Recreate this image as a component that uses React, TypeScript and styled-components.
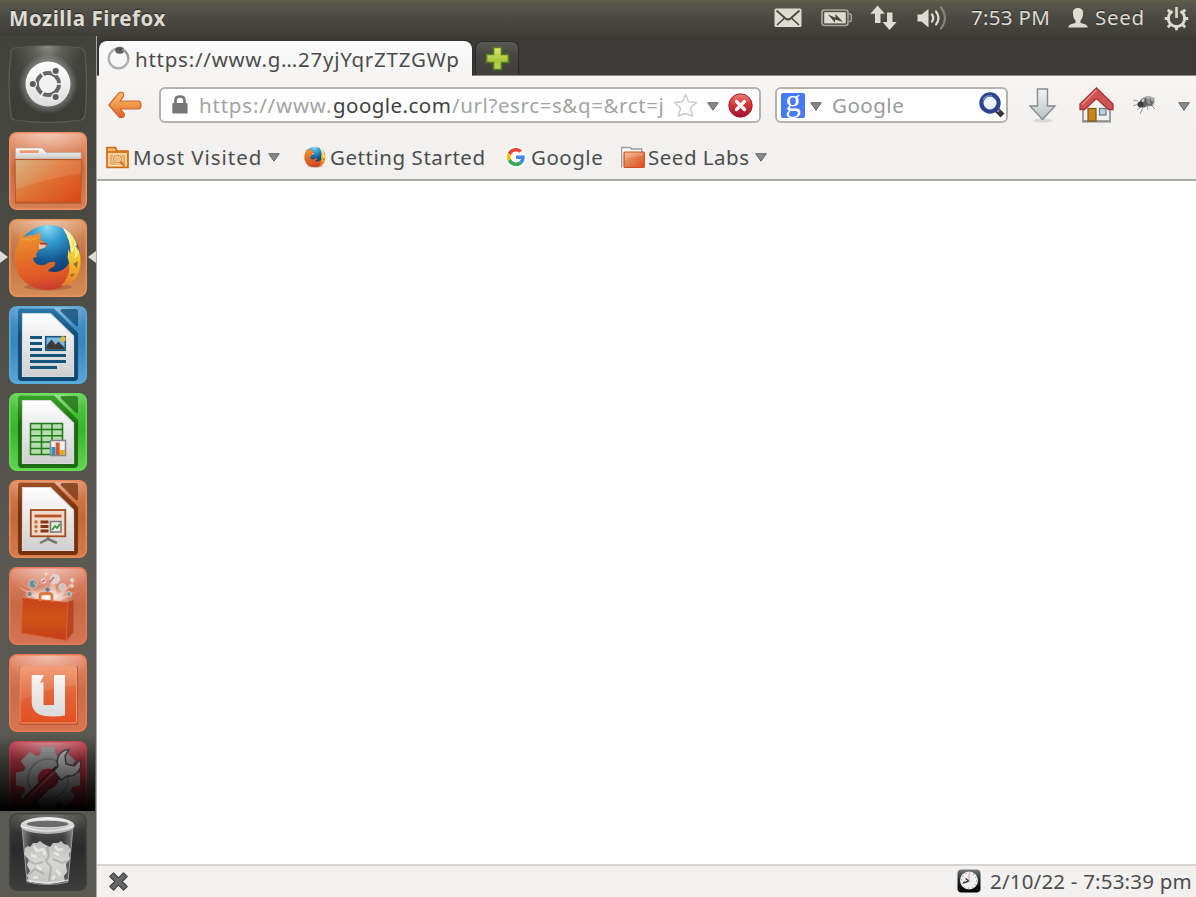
import React from "react";
import styled, { createGlobalStyle, css } from "styled-components";

const Global = createGlobalStyle`
  * { box-sizing: border-box; }
  html, body { margin: 0; padding: 0; overflow: hidden; }
  body { font-family: "Noto Sans", "Open Sans", sans-serif; font-size: 21px; color: #4c4c4c; background: #fff; }
  svg { display: block; flex: none; overflow: visible; }
`;

const Desktop = styled.div`
  width: 1196px;
  height: 897px;
  display: flex;
  flex-direction: column;
  overflow: hidden;
  background: #3c3b37;
`;

const Panel = styled.header`
  height: 36px;
  flex: none;
  display: flex;
  align-items: center;
  justify-content: space-between;
  padding: 0 7px 0 9px;
  background: linear-gradient(#625f50 0, #59574d 3px, #4a4943 18px, #3e3d38 36px);
`;

const Indicators = styled.div`
  display: flex;
  align-items: center;
`;

const Text = styled.span<{ $w?: number; $ls?: number; $size?: number }>`
  display: block;
  flex: none;
  white-space: nowrap;
  line-height: 28px;
  ${(p) => p.$w !== undefined && css`width: ${p.$w}px;`}
  letter-spacing: ${(p) => p.$ls ?? 0}px;
  font-size: ${(p) => p.$size ?? 20.5}px;
`;

const PanelText = styled(Text)`
  color: #dfdbd2;
  text-shadow: 0 -1px 1px rgba(0, 0, 0, 0.5);
  margin-top: -2px;
`;

const PanelTitle = styled(PanelText)`
  font-weight: 700;
  margin-top: 0;
`;

const Gap = styled.i<{ $w: number }>`
  flex: none;
  width: ${(p) => p.$w}px;
`;

const Workspace = styled.div`
  flex: 1;
  min-height: 0;
  display: flex;
`;

const Launcher = styled.nav`
  position: relative;
  width: 96px;
  flex: none;
  display: flex;
  flex-direction: column;
  padding: 9px 0 0 9px;
  gap: 9px;
  background: linear-gradient(165deg, #41423c 0, #4b4b44 24%, #595951 60%, #5c5c54 100%);
  overflow: hidden;
`;

const Tile = styled.div<{ $bg: string; $edge: string }>`
  width: 78px;
  height: 78px;
  flex: none;
  border-radius: 8px;
  background: ${(p) => p.$bg};
  box-shadow: inset 0 0 0 1.5px ${(p) => p.$edge};
`;

const LauncherFold = styled.div`
  position: absolute;
  left: 0;
  top: 698px;
  width: 95px;
  height: 77px;
  background: linear-gradient(rgba(0, 0, 0, 0) 0, rgba(0, 0, 0, 0.36) 30%, rgba(0, 0, 0, 0.68) 62%, rgba(0, 0, 0, 0.97) 94%, #000);
`;

const TrashDock = styled.div`
  position: absolute;
  left: 0;
  top: 775px;
  width: 95px;
  height: 86px;
  padding: 2px 0 0 9px;
  background: #5a5a52;
`;

const Pip = styled.div<{ $right?: boolean }>`
  position: absolute;
  top: 215px;
  ${(p) => (p.$right ? "right: 0;" : "left: 0;")}
  border: 6px solid transparent;
  border-${(p) => (p.$right ? "right" : "left")}: 8px solid #dcdcda;
  border-${(p) => (p.$right ? "left" : "right")}: 0;
`;

const Browser = styled.main`
  flex: 1;
  min-width: 0;
  display: flex;
  flex-direction: column;
  border-left: 1px solid #aaa9a1;
  background: #fff;
`;

const TabStrip = styled.div`
  height: 40px;
  flex: none;
  display: flex;
  align-items: flex-end;
  padding-left: 2px;
  background: #3c3b37;
  border-bottom: 1px solid #8d8c88;
`;

const Tab = styled.div`
  height: 35px;
  width: 373px;
  margin-bottom: -1px;
  display: flex;
  align-items: center;
  padding-left: 8px;
  border-radius: 8px 8px 0 0;
  background: linear-gradient(#fbfbfb, #f5f4f3);
  box-shadow: 0 0 3px #1e1d1a;
`;

const NewTab = styled.button`
  width: 44px;
  height: 34px;
  margin-left: 3px;
  padding: 0;
  display: flex;
  align-items: center;
  justify-content: center;
  border: 1px solid #292824;
  border-bottom: 0;
  border-radius: 7px 7px 0 0;
  background: linear-gradient(#5a5955, #484742 35%, #3f3e3a);
`;

const NavBar = styled.div`
  height: 58px;
  flex: none;
  display: flex;
  align-items: center;
  padding-left: 11px;
  background: linear-gradient(#f6f5f4, #f2f1f0);
`;

const Field = styled.div<{ $w: number }>`
  width: ${(p) => p.$w}px;
  height: 36px;
  flex: none;
  display: flex;
  align-items: center;
  border: 2px solid #b5b2ad;
  border-radius: 6px;
  background: #fff;
`;

const UrlClip = styled.div`
  width: 465px;
  flex: none;
  overflow: hidden;
  display: flex;
`;

const UrlPart = styled(Text)<{ $strong?: boolean }>`
  color: ${(p) => (p.$strong ? "#3f3f3f" : "#a3a3a3")};
`;

const Placeholder = styled(Text)`
  color: #9a9a9a;
`;

const BookmarkBar = styled.div`
  height: 47px;
  flex: none;
  display: flex;
  align-items: center;
  padding-left: 9px;
  background: #f2f1f0;
  border-bottom: 2px solid #aaa9a6;
`;

const Page = styled.div`
  flex: 1;
  background: #fff;
`;

const StatusBar = styled.footer`
  height: 33px;
  flex: none;
  display: flex;
  align-items: center;
  justify-content: space-between;
  padding: 0 4px 0 12px;
  background: #f2f1f0;
  border-top: 2px solid #d5d4d2;
`;

const ClockGroup = styled.div`
  display: flex;
  align-items: center;
  height: 28px;
  margin-top: -2px;
`;

const CaretSvg = styled.svg`
  position: relative;
  top: 1px;
`;

const Caret = () => (
  <CaretSvg width="12" height="9" viewBox="0 0 12 9">
    <path d="M.7.7h10.6L6 8.200z" fill="#888" stroke="#666" strokeWidth="1" />
  </CaretSvg>
);

const MailIcon = () => (
  <svg width="28" height="20" viewBox="0 0 28 20">
    <rect x=".5" y=".5" width="27" height="18.500" rx="1.500" fill="#dfdbd2" />
    <path d="M2.500 2.500l9 8q2.500 2 5 0l9-8M3 17l7-6.500M25 17l-7-6.500" fill="none" stroke="#46453f" strokeWidth="1.700" />
  </svg>
);

const BatteryIcon = () => (
  <svg width="31" height="18" viewBox="0 0 31 18">
    <rect x="1" y="1" width="26" height="15.500" rx="2.500" fill="none" stroke="#aaa79e" strokeWidth="1.600" />
    <path d="M28 5h1q1.300 0 1.300 1.500v4.500q0 1.500-1.300 1.500h-1" fill="none" stroke="#aaa79e" strokeWidth="1.500" />
    <rect x="3.200" y="3.200" width="21.600" height="11.200" fill="#dfdbd2" />
    <path d="M7 5.500l7.500 3.300V5l7.500 8-8-2.500v3.300z" fill="#46453f" />
  </svg>
);

const NetworkIcon = () => (
  <svg width="27" height="26" viewBox="0 0 27 26">
    <path d="M7.500.5l7.300 8.300H10.500V18H5V8.800H.5zM19.500 25l-7-8H17V7.500h5.500V17h4.200z" fill="#dfdbd2" />
  </svg>
);

const SpeakerIcon = () => (
  <svg width="30" height="26" viewBox="0 0 30 26">
    <path d="M.5 9.500h4L11.500 4v18.500l-7-6h-4z" fill="#dfdbd2" />
    <g fill="none" strokeLinecap="round" strokeWidth="2.200">
      <path d="M15 9.500q2.500 3.500 0 7" stroke="#dfdbd2" />
      <path d="M19 6.500q5 6.500 0 13" stroke="#dfdbd2" />
      <path d="M24 2.500q8 10.500 0 21" stroke="#85827a" />
    </g>
  </svg>
);

const UserIcon = () => (
  <svg width="20" height="20" viewBox="0 0 20 20">
    <path d="M10 0c4 0 5.500 2.500 5 6-.2 3-1 5-2.500 6.500V15c3 .8 6.800 1.200 7.300 4.500H.2C.7 16.200 4.500 15.800 7.500 15v-2.500C6 11 5.200 9 5 6 4.500 2.500 6 0 10 0z" fill="#dfdbd2" />
  </svg>
);

const SessionIcon = () => (
  <svg width="25" height="25" viewBox="0 0 25 25">
    <g stroke="#dfdbd2" fill="none">
      <path d="M8.500 5.300a8.200 8.200 0 1 0 8 0" strokeWidth="2.700" />
      <path d="M12.500 1v11" strokeWidth="2.600" />
      <path d="M3.800 3.800L7 7M21.200 3.800L18 7M.8 12.500h5M24.200 12.500h-5M3.800 21.200L7 18M21.200 21.200L18 18M12.500 24.200v-5" strokeWidth="2.800" />
    </g>
  </svg>
);

const DashIcon = () => (
  <svg width="78" height="78" viewBox="0 0 78 78">
    <defs>
      <radialGradient id="dashTile" cx=".5" cy="0" r=".9">
        <stop offset="0" stopColor="#8d8d88" />
        <stop offset=".22" stopColor="#5c5d57" />
        <stop offset=".5" stopColor="#42433d" />
        <stop offset="1" stopColor="#3c3d37" />
      </radialGradient>
      <radialGradient id="dashGlow">
        <stop offset=".6" stopColor="#fff" stopOpacity=".4" />
        <stop offset="1" stopColor="#fff" stopOpacity="0" />
      </radialGradient>
      <linearGradient id="dashDisc" x2="0" y2="1">
        <stop stopColor="#fff" />
        <stop offset="1" stopColor="#ddd" />
      </linearGradient>
    </defs>
    <path d="M6 3q33-5 66 0 3 1 4 5 3 31 0 62-1 4-4 5-33 5-66 0-4-1-4-5-4-31 0-62 0-4 4-5z" fill="url(#dashTile)" stroke="#5c5d57" strokeWidth="1.200" />
    <circle cx="39" cy="39" r="30" fill="url(#dashGlow)" />
    <circle cx="39" cy="39" r="22.500" fill="url(#dashDisc)" />
    <circle cx="39" cy="39" r="11" fill="none" stroke="#666662" strokeWidth="4" />
    <g stroke="#f3f3f3" strokeWidth="1.600">
      <path d="M39 39l-8-14M39 39l-8 14M39 39h15" />
    </g>
    <circle cx="39" cy="39" r="8.800" fill="#f2f2f2" />
    <g fill="#5b5b57" stroke="#f3f3f3" strokeWidth="1.300">
      <circle cx="23.800" cy="39" r="3.700" />
      <circle cx="46.700" cy="26" r="3.700" />
      <circle cx="46.700" cy="52" r="3.700" />
    </g>
  </svg>
);

const FilesIcon = () => (
  <svg width="78" height="78" viewBox="0 0 78 78">
    <defs>
      <linearGradient id="folderFront" x1="0" y1="0" x2="1" y2=".8">
        <stop stopColor="#cfae76" />
        <stop offset=".5" stopColor="#df7435" />
        <stop offset="1" stopColor="#dc4c1d" />
      </linearGradient>
      <linearGradient id="folderTab" x2="0" y2="1">
        <stop stopColor="#fff" />
        <stop offset="1" stopColor="#c9c9c9" />
      </linearGradient>
    </defs>
    <path d="M6 70h67v2H6z" fill="#7d3210" opacity=".3" />
    <path d="M6.500 27V16h26.500l4.500 4.500H72V27z" fill="url(#folderTab)" stroke="#c1a79a" strokeWidth=".8" />
    <rect x="10.500" y="18.300" width="19.500" height="2.600" rx="1" fill="#ec9a6f" />
    <path d="M6 27.500h66.500L71.500 70h-65z" fill="url(#folderFront)" stroke="#c25222" />
    <path d="M7 57V28.500h65v13Q40 46 7 57z" fill="#fff" opacity=".11" />
  </svg>
);

const FirefoxIcon = ({ size = 78, box = "0 0 78 78" }: { size?: number; box?: string }) => (
  <svg width={size} height={size} viewBox={box}>
    <defs>
      <radialGradient id="ffGlobe" cx=".48" cy=".02" r=".85">
        <stop stopColor="#8fdcf6" />
        <stop offset=".3" stopColor="#339fd2" />
        <stop offset=".65" stopColor="#155691" />
        <stop offset="1" stopColor="#0c2d61" />
      </radialGradient>
      <linearGradient id="ffFox" x1=".3" x2=".45" y2="1">
        <stop stopColor="#ee9530" />
        <stop offset=".45" stopColor="#e46f26" />
        <stop offset=".8" stopColor="#dd5527" />
        <stop offset="1" stopColor="#c53a31" />
      </linearGradient>
      <linearGradient id="ffTail" x2="0" y2="1">
        <stop stopColor="#fff7cf" />
        <stop offset=".35" stopColor="#f3dc3a" />
        <stop offset=".65" stopColor="#f0b72a" />
        <stop offset="1" stopColor="#e4762a" />
      </linearGradient>
    </defs>
    <ellipse cx="39" cy="68" rx="24" ry="3.500" fill="#7e3512" opacity=".3" />
    <circle cx="39.500" cy="37.500" r="31.500" fill="url(#ffGlobe)" />
    <path d="M13 13l1 6q4-3 9-3 5 0 9-3-1 4-.5 8l6.500 4-1 3-7 3-3 4 1 3-4 1q1 6 7 7 4 1 8-2 4-2 7-1 1 3-2 5-3 1-5 4 10 3 17-3 6-5 5-14l11-1q1 14-7 24-9 12-25 13Q22 71 12 59 5 50 6 38q0-9 4-15 0-7 3-10z" fill="url(#ffFox)" />
    <path d="M54 9q8 4 12 12 2 3 2 6 4 8 3.500 18-1 14-11 20-5 2-9 2 8-7 9-17 0-7-2-12l1-8q1 3 2 5 0-14-7.500-26z" fill="url(#ffTail)" />
    <path d="M55 10q8 10 8 23l3-8q2 8 0 14l4-7" stroke="#fffbd0" strokeWidth="1.300" fill="none" opacity=".75" />
    <path d="M64 45l5-3-1 7zM61 56l5-2-3 4zM66 27l3-1v4z" fill="#6e5134" opacity=".7" />
    <path d="M30 25l8 .5-3 3.500-5 1z" fill="#ecc6ac" />
    <path d="M31 24.500l7 .5" stroke="#b83225" strokeWidth="1.600" />
    <path d="M14 20l9 1 5-2" stroke="#f4ae48" strokeWidth="2" opacity=".5" fill="none" />
  </svg>
);

const OfficeSheet = ({ id, dark, mid, children }: { id: string; dark: string; mid: string; children: React.ReactNode }) => (
  <svg width="78" height="78" viewBox="0 0 78 78">
    <defs>
      <linearGradient id={id} x2="0" y2="1">
        <stop stopColor={mid} />
        <stop offset=".4" stopColor={dark} />
        <stop offset="1" stopColor={dark} />
      </linearGradient>
      <linearGradient id={id + "p"} x2="0" y2="1">
        <stop stopColor="#fff" />
        <stop offset="1" stopColor="#cfcfd0" />
      </linearGradient>
    </defs>
    <path d="M12 2.500h33L69 27v44q0 4-4 4H13q-4 0-4-4V5.500q0-3 3-3z" fill={`url(#${id})`} />
    <path d="M52.500 3h14q2.500 0 2.500 3v13q0 2-2 1L51.500 5z" fill={dark} opacity=".75" />
    <path d="M13.500 7.500h28L64.500 30v40.500h-51z" fill={`url(#${id}p)`} stroke="#dadada" strokeWidth="1.200" />
    {children}
  </svg>
);

const WriterIcon = () => (
  <OfficeSheet id="writer" dark="#114a76" mid="#2877aa">
    <path d="M21 31.500h12M21 37.500h12M21 43.500h12M21 49.500h36M21 55.500h36M21 61.500h27" stroke="#13557f" strokeWidth="3" />
    <rect x="36.700" y="30.700" width="19.600" height="13.600" fill="#7fb6dc" stroke="#13557f" strokeWidth="1.500" />
    <circle cx="54" cy="33" r="2.800" fill="#dfbe35" />
    <path d="M37.500 43.500v-4l5-6 4 5 3-3 6 6v2z" fill="#3b3b3b" />
  </OfficeSheet>
);

const CalcIcon = () => (
  <OfficeSheet id="calc" dark="#1c6b10" mid="#37a327">
    <rect x="21.500" y="30.500" width="32" height="31" fill="#b5dfae" stroke="#1f7a17" strokeWidth="1.500" />
    <path d="M32.500 30v32M43 30v32M21 36.500h33M21 42.800h33M21 49h33M21 55.500h33" stroke="#1f7a17" strokeWidth="1.500" />
    <rect x="41.500" y="47.500" width="15" height="15" fill="#efefef" stroke="#85858b" strokeWidth="1.500" />
    <path d="M42.500 54h4v8h-4z" fill="#2c8fc7" />
    <path d="M46.700 49.500h4V62h-4z" fill="#d35a27" />
    <path d="M51 57h5v5h-5z" fill="#dbae2c" />
  </OfficeSheet>
);

const ImpressIcon = () => (
  <OfficeSheet id="impress" dark="#76310f" mid="#9d4c20">
    <path d="M39 56v3l-8 4M39 59l9 4" stroke="#777" strokeWidth="2.500" fill="none" />
    <rect x="21.800" y="30" width="34.500" height="26.300" fill="#f0dacd" stroke="#a44a1c" strokeWidth="1.800" />
    <path d="M25.500 36h27" stroke="#b9521c" strokeWidth="2.800" />
    <path d="M27 40.500v12" stroke="#c56632" strokeWidth="3" strokeDasharray="3 1.700" />
    <path d="M31.500 42h8M31.500 46.500h8M31.500 51h8" stroke="#863611" strokeWidth="3" />
    <rect x="41.500" y="41.500" width="10.500" height="10.500" fill="#e9ece6" stroke="#777" strokeWidth="1.500" />
    <path d="M43 50l3-4 2 2 3-4" stroke="#319a34" strokeWidth="1.800" fill="none" />
  </OfficeSheet>
);

const SoftwareIcon = () => (
  <svg width="78" height="78" viewBox="0 0 78 78">
    <defs>
      <radialGradient id="bagGlow">
        <stop stopColor="#fff" />
        <stop offset="1" stopColor="#fff" stopOpacity="0" />
      </radialGradient>
      <linearGradient id="bagFront" x2="0" y2="1">
        <stop stopColor="#c8441a" />
        <stop offset=".5" stopColor="#cf5316" />
        <stop offset="1" stopColor="#c63c1a" />
      </linearGradient>
    </defs>
    <ellipse cx="39" cy="30" rx="26" ry="11" fill="url(#bagGlow)" />
    <path d="M38 32L10 14l18 14L8 19l20 14zM38 32L44 6l4 22L68 11 53 30l16-6-18 10z" fill="#fff" opacity=".35" />
    <g stroke="#e8d5cf" strokeWidth=".8">
      <circle cx="24" cy="17" r="4.200" fill="#688fa9" />
      <circle cx="46" cy="12" r="4.700" fill="#ded2d0" />
      <circle cx="53.500" cy="20" r="3.500" fill="#ccc3bd" />
      <circle cx="38.500" cy="22.500" r="2.800" fill="#777f86" />
      <circle cx="20.500" cy="27" r="2.800" fill="#8e8988" />
      <circle cx="60" cy="27" r="2.500" fill="#8d9698" />
      <circle cx="34.500" cy="14" r="2.300" fill="#ebd4cf" />
      <circle cx="63" cy="13" r="1.700" fill="#dcd9be" />
      <circle cx="63" cy="19" r="1.500" fill="#e5cdb0" />
      <circle cx="37" cy="7" r="1.300" fill="#f2c8ba" />
    </g>
    <path d="M45 10l-4 5M33 15l3-2" stroke="#b14f56" strokeWidth="1.200" />
    <path d="M25 15l2 4" stroke="#d9c163" strokeWidth="1.500" />
    <path d="M59 35l5.500-2v32L57.500 73.500z" fill="#bd4420" />
    <path d="M13.500 31l45.500 4.500L57 73.500 12.500 66z" fill="url(#bagFront)" stroke="#d95f2b" strokeWidth=".8" />
    <path d="M31 34v-5q0-2.500 3.500-2.500h5q3.500 0 3.500 2.500v6" fill="none" stroke="#dc7a3e" strokeWidth="2.800" />
  </svg>
);

const UbuntuOneIcon = () => (
  <svg width="78" height="78" viewBox="0 0 78 78">
    <defs>
      <linearGradient id="oneBg" x2="0" y2="1">
        <stop stopColor="#f09469" />
        <stop offset=".5" stopColor="#e06335" />
        <stop offset="1" stopColor="#e55022" />
      </linearGradient>
      <linearGradient id="oneMark" x2="0" y2="1">
        <stop stopColor="#f8f5f3" />
        <stop offset="1" stopColor="#dadada" />
      </linearGradient>
    </defs>
    <rect x="10" y="12" width="59" height="59" rx="2" fill="#a63f1b" opacity=".55" />
    <rect x="11" y="12.500" width="56.500" height="56.500" rx="1.500" fill="url(#oneBg)" stroke="#ef9a70" />
    <path d="M11.500 47V13h55.500v18Q35 34 11.500 47z" fill="#fff" opacity=".1" />
    <path d="M22.700 21h12.300l-4 8 3.500-1v23h10.500V21h11v40.500q-5 1-12 1c-14 0-21.300-4-21.300-15z" fill="url(#oneMark)" />
  </svg>
);

const SettingsIcon = () => (
  <svg width="78" height="78" viewBox="0 0 78 78">
    <g fill="#b4b4b4">
      <circle cx="39" cy="38" r="25.500" />
      {[0, 45, 90, 135, 180, 225, 270, 315].map((a) => (
        <path key={a} d="M31 14l1.500-8h13l1.500 8z" transform={`rotate(${a} 39 38)`} />
      ))}
    </g>
    <circle cx="39" cy="38" r="20" fill="none" stroke="#8b8b8b" strokeWidth="1.500" />
    <circle cx="39" cy="38" r="10.500" fill="#c02f3c" />
    <path d="M49 31L17 63" stroke="#5e1a22" strokeWidth="12" strokeLinecap="round" />
    <path d="M49 31L17 63" stroke="#a02a38" strokeWidth="9.500" strokeLinecap="round" />
    <path d="M47 29L14 62" stroke="#cc5a66" strokeWidth="2" />
    <path d="M45 30l4-5c-3-9 3-16 11-16.500L56 15l1 8 8 2 6-6c3 8-3 17-13 16l-6 4z" fill="#d9d9d9" stroke="#555" strokeWidth="1.500" />
  </svg>
);

const TrashIcon = () => (
  <svg width="78" height="78" viewBox="0 0 78 78">
    <defs>
      <linearGradient id="rim" x2="0" y2="1">
        <stop stopColor="#f4f4f4" />
        <stop offset="1" stopColor="#aaa" />
      </linearGradient>
      <linearGradient id="glass">
        <stop stopColor="#ddd" stopOpacity=".5" />
        <stop offset=".2" stopColor="#888" stopOpacity=".15" />
        <stop offset=".8" stopColor="#888" stopOpacity=".15" />
        <stop offset="1" stopColor="#ddd" stopOpacity=".5" />
      </linearGradient>
      <linearGradient id="paper" x2="0" y2="1">
        <stop stopColor="#bcbcba" />
        <stop offset=".5" stopColor="#d6d6d4" />
        <stop offset="1" stopColor="#c3c3c1" />
      </linearGradient>
    </defs>
    <path d="M13 14h51l-5 55q-20 5-41 0z" fill="url(#glass)" stroke="#999" strokeWidth="1" />
    <path d="M16 35l3-2 2 1 3-4 4 0 3-2 4 3 6 3 3-4 5 0 3-2 3 3 4 1 3 5-2 4 1 5-4 5 1 8-3 4 1 5-16 3-20-2-2-7 3-4-3-6 2-5-5-6z" fill="url(#paper)" />
    <path d="M38 34l2 9-3 5 5 6-2 14M18 47l8 4 8-2M44 46l9 4 7-2M19 62l7-6 9 5" fill="none" stroke="#8d8d8b" strokeWidth="2" opacity=".45" />
    <path d="M25 33l3 5 6-2 2 6M46 33l3 4 5-1M22 42l6 2M28 53l4 4M45 40l5 2M47 57l5 5M24 65l5-1M43 66l3-3" fill="none" stroke="#f4f4f2" strokeWidth="2.500" opacity=".65" />
    <path d="M18 67q20 6 41 0" fill="none" stroke="#eee" strokeWidth="1.500" opacity=".8" />
    <ellipse cx="38.500" cy="12.500" rx="27" ry="8.500" fill="url(#rim)" />
    <ellipse cx="38.500" cy="11" rx="21.500" ry="3.800" fill="#6b6b6b" stroke="#eee" strokeWidth=".8" />
    <path d="M12 13q26 10 53 0" fill="none" stroke="#fff" strokeWidth="1.500" opacity=".6" />
  </svg>
);

const SpinnerIcon = () => (
  <svg width="23" height="24" viewBox="0 0 23 24">
    <circle cx="11.500" cy="11.500" r="9.800" fill="none" stroke="#adadad" strokeWidth="2.300" />
    <ellipse cx="12.700" cy="3.300" rx="4.500" ry="3.500" fill="#444" opacity=".85" />
    <path d="M15 2.500q6 2 6.300 9" fill="none" stroke="#999" strokeWidth="2" />
  </svg>
);

const PlusIcon = () => (
  <svg width="25" height="25" viewBox="0 0 25 25">
    <defs>
      <linearGradient id="plus" x2="0" y2="1">
        <stop stopColor="#dfe96f" />
        <stop offset=".6" stopColor="#a9c63d" />
        <stop offset="1" stopColor="#bdd850" />
      </linearGradient>
    </defs>
    <path d="M8.500 1.500h8v7h7v8h-7v7h-8v-7h-7v-8h7z" fill="url(#plus)" stroke="#547c25" strokeWidth="1.700" />
  </svg>
);

const BackIcon = () => (
  <svg width="34" height="28" viewBox="0 0 34 28">
    <defs>
      <linearGradient id="back" x2="0" y2="1">
        <stop stopColor="#f9c071" />
        <stop offset=".5" stopColor="#ee9a49" />
        <stop offset="1" stopColor="#e35b2a" />
      </linearGradient>
    </defs>
    <path d="M13 1.200q3.500.3 2.500 4L12.300 10H30q3 0 3 4t-3 4H12.300l4 5q.7 3.300-3 3.500-2 .3-3-1.500L.8 14 10 3q1.500-2 3-1.800z" fill="url(#back)" stroke="#d4602c" strokeWidth="1.200" />
  </svg>
);

const LockIcon = () => (
  <svg width="16" height="20" viewBox="0 0 16 20">
    <path d="M3.500 10V5.500q0-4 4.500-4t4.500 4V10" fill="none" stroke="#777" strokeWidth="2.700" />
    <rect x=".3" y="8" width="15.300" height="10.500" rx="1" fill="#777" />
  </svg>
);

const StarIcon = () => (
  <svg width="25" height="25" viewBox="0 0 25 25">
    <path d="M12.500 1.500l3 7.200 8 .8-6 5.500 2 8-7-2.500-7 2.500 2-8-6-5.500 8-.8z" fill="#fff" stroke="#cbcbcb" strokeWidth="1.500" strokeLinejoin="round" />
  </svg>
);

const StopIcon = () => (
  <svg width="25" height="25" viewBox="0 0 25 25">
    <defs>
      <linearGradient id="stop" x2="0" y2="1">
        <stop stopColor="#e9817c" />
        <stop offset=".45" stopColor="#d53634" />
        <stop offset="1" stopColor="#9c1236" />
      </linearGradient>
    </defs>
    <circle cx="12.500" cy="12.500" r="11.700" fill="url(#stop)" stroke="#a91d2d" />
    <path d="M8.500 8.500l8 8M16.500 8.500l-8 8" stroke="#fff" strokeWidth="3.200" strokeLinecap="round" />
  </svg>
);

const SearchEngine = styled.div`
  width: 24px;
  height: 25px;
  flex: none;
  border-radius: 2px;
  background: #4579f5;
  color: #fff;
  font: 31px/15px "Liberation Serif", serif;
  text-align: center;
`;

const MagnifierIcon = () => (
  <svg width="26" height="26" viewBox="0 0 26 26">
    <path d="M17 17l6.500 6.500" stroke="#353535" strokeWidth="5.500" />
    <path d="M16 16l4 3.500" stroke="#9b9ea5" strokeWidth="2.500" />
    <circle cx="11" cy="11" r="8.600" fill="#eef2fa" stroke="#2c4390" strokeWidth="4.200" />
    <path d="M4 8q3-5 9-4" stroke="#6e85c6" strokeWidth="1.500" fill="none" />
  </svg>
);

const DownloadIcon = () => (
  <svg width="27" height="35" viewBox="0 0 27 35">
    <defs>
      <linearGradient id="down" x2="0" y2="1">
        <stop stopColor="#f4f5f5" />
        <stop offset="1" stopColor="#b7c2c8" />
      </linearGradient>
    </defs>
    <ellipse cx="14" cy="32.500" rx="10" ry="2" fill="#777" opacity=".2" />
    <path d="M8.500 1h10v17H26L13.500 31.500 1 18h7.500z" fill="url(#down)" stroke="#858a8c" strokeWidth="1.400" />
  </svg>
);

const HomeIcon = () => (
  <svg width="35" height="36" viewBox="0 0 35 36">
    <path d="M4 18L17.500 5 31 18v16H4z" fill="#f2f3f1" stroke="#868985" strokeWidth="1.500" />
    <path d="M3 35h29" stroke="#777" strokeWidth="1.500" opacity=".6" />
    <path d="M17.500 1L34 17v5.500h-4.500L17.500 11.500 5.500 22.500H1V17z" fill="#cf5353" stroke="#a53434" strokeWidth="1.300" />
    <path d="M17.500 3L3 17.500" stroke="#e68e89" strokeWidth="1.500" />
    <rect x="9" y="21.500" width="8" height="12.500" fill="#c7861c" stroke="#85560d" strokeWidth="1.200" />
    <rect x="20.500" y="21.500" width="6.500" height="6.500" fill="#bdd3e1" stroke="#66777f" strokeWidth="1.200" />
  </svg>
);

const FlyIcon = () => (
  <svg width="25" height="20" viewBox="0 0 25 20">
    <g stroke="#999" strokeWidth="1" fill="none">
      <path d="M6 6L1 5M6 9l-5 2M9 12l-4 3M11 12l-3 7M15 11l1 4M18 9l5 5M18 5l5-2" />
    </g>
    <ellipse cx="17" cy="6.500" rx="5.500" ry="5" fill="#8d8d8a" />
    <ellipse cx="16" cy="4" rx="5.500" ry="3" fill="#b0b0ad" />
    <ellipse cx="11.500" cy="8" rx="4" ry="4.500" fill="#606060" />
    <circle cx="8.500" cy="9.500" r="3" fill="#3d3d3d" />
    <path d="M13 3l8 5M14 9l6 1M18 3l2 8" stroke="#5d5d5d" strokeWidth="1" />
    <circle cx="11" cy="5.500" r="1.400" fill="#ccc" />
  </svg>
);

const MostVisitedIcon = () => (
  <svg width="23" height="24" viewBox="0 0 23 24">
    <path d="M1 2.500V22.500h21V6H11L9.500 2.500H1.500z" fill="#f3b86f" stroke="#cf6a13" strokeWidth="1.700" />
    <path d="M2 7h19" stroke="#d5741e" strokeWidth="1.800" />
    <rect x="3" y="9" width="17" height="11.500" fill="#edad68" stroke="#fff0cc" strokeWidth="1" />
    <circle cx="11.500" cy="14" r="4" fill="#f8bf7b" stroke="#fff4dc" strokeWidth="2.200" />
    <circle cx="11.500" cy="14" r="4" fill="none" stroke="#c2691b" strokeWidth=".9" />
    <path d="M14.500 17l4 4" stroke="#ca6b18" strokeWidth="1.800" />
  </svg>
);

const GoogleIcon = () => (
  <svg width="22" height="22" viewBox="-5 -5 58 58">
    <circle cx="24" cy="24" r="29" fill="#fff" />
    <path fill="#EA4335" d="M24 9.500c3.540 0 6.710 1.220 9.210 3.600l6.850-6.850C35.900 2.380 30.470 0 24 0 14.620 0 6.510 5.380 2.560 13.220l7.980 6.190C12.430 13.720 17.740 9.500 24 9.500z" />
    <path fill="#4285F4" d="M46.980 24.550c0-1.570-.15-3.090-.38-4.550H24v9.020h12.940c-.58 2.960-2.260 5.480-4.780 7.180l7.730 6c4.510-4.180 7.090-10.360 7.090-17.650z" />
    <path fill="#FBBC05" d="M10.530 28.590a14.500 14.500 0 0 1 0-9.180l-7.980-6.190a24 24 0 0 0 0 21.560z" />
    <path fill="#34A853" d="M24 48c6.480 0 11.930-2.130 15.890-5.810l-7.730-6c-2.150 1.450-4.920 2.300-8.160 2.300-6.260 0-11.570-4.220-13.470-9.910l-7.980 6.190C6.510 42.620 14.620 48 24 48z" />
  </svg>
);

const FolderIcon = () => (
  <svg width="24" height="22" viewBox="0 0 24 22">
    <defs>
      <linearGradient id="smallFolder" x2="1" y2="1">
        <stop stopColor="#edb078" />
        <stop offset="1" stopColor="#d9481c" />
      </linearGradient>
    </defs>
    <path d="M.7 21.500V1.500h8.500l1 1.500h10.500V6" fill="#fafafa" stroke="#9b9b9b" strokeWidth="1.300" />
    <rect x="3" y="6" width="20.300" height="15.500" rx="1" fill="url(#smallFolder)" stroke="#ce5023" strokeWidth="1.200" />
    <path d="M4 13V6.500h18.500v3Q12 10 4 13z" fill="#fff" opacity=".18" />
  </svg>
);

const CloseIcon = () => (
  <svg width="19" height="19" viewBox="0 0 19 19">
    <path d="M4.500.8l5 5 5-5 3.700 3.700-5 5 5 5-3.700 3.700-5-5-5 5L.8 14.500l5-5-5-5z" fill="#666" stroke="#444" strokeWidth="1.200" strokeLinejoin="round" />
  </svg>
);

const ClockIcon = () => (
  <svg width="24" height="24" viewBox="0 0 24 24">
    <defs>
      <linearGradient id="clock" x2="0" y2="1">
        <stop stopColor="#777" />
        <stop offset=".5" stopColor="#222" />
        <stop offset="1" stopColor="#000" />
      </linearGradient>
    </defs>
    <rect x=".5" y=".5" width="23" height="23" rx="4" fill="url(#clock)" />
    <circle cx="12" cy="11.500" r="9" fill="#f1f1f1" />
    <circle cx="12" cy="11.500" r="7.500" fill="none" stroke="#777" strokeWidth="1" strokeDasharray="1 2.930" />
    <path d="M12 12L6 14M12 12L8.500 9.500" stroke="#333" strokeWidth="1.500" />
    <path d="M12 13V5" stroke="#de7c7c" strokeWidth=".8" />
  </svg>
);

const warm = (top: string, mid: string, low: string) =>
  `radial-gradient(ellipse 46px 26px at 50% 0, rgba(255,255,255,.5), rgba(255,255,255,0)), linear-gradient(${top}, ${mid} 48%, ${low})`;

export default function App() {
  return (
    <Desktop>
      <Global />
      <Panel>
        <PanelTitle $w={158} $ls={0.55}>Mozilla Firefox</PanelTitle>
        <Indicators>
          <MailIcon />
          <Gap $w={19} />
          <BatteryIcon />
          <Gap $w={18} />
          <NetworkIcon />
          <Gap $w={20} />
          <SpeakerIcon />
          <Gap $w={24} />
          <PanelText $w={79} $ls={0.3}>7:53 PM</PanelText>
          <Gap $w={18} />
          <UserIcon />
          <Gap $w={7} />
          <PanelText $w={50} $ls={0.7}>Seed</PanelText>
          <Gap $w={19} />
          <SessionIcon />
        </Indicators>
      </Panel>
      <Workspace>
        <Launcher>
          <DashIcon />
          <Tile $bg={warm("#eb9c79", "#c96b42", "#d68056")} $edge="#ef9164"><FilesIcon /></Tile>
          <Tile $bg={warm("#dc935f", "#bd7346", "#d78d56")} $edge="#e8945a"><FirefoxIcon /></Tile>
          <Tile $bg={warm("#4a94c8", "#3786bd", "#59a6d8")} $edge="#5aabdd"><WriterIcon /></Tile>
          <Tile $bg={warm("#55cb45", "#37b52b", "#63d554")} $edge="#66de55"><CalcIcon /></Tile>
          <Tile $bg={warm("#dc8354", "#c2683b", "#d77c4c")} $edge="#e98a58"><ImpressIcon /></Tile>
          <Tile $bg={warm("#e08b72", "#c86845", "#d47456")} $edge="#e67b55"><SoftwareIcon /></Tile>
          <Tile $bg={warm("#e98a6b", "#c96b4b", "#d97450")} $edge="#ec7b50"><UbuntuOneIcon /></Tile>
          <Tile $bg={warm("#e0485a", "#b5303e", "#8b2430")} $edge="#e0525f"><SettingsIcon /></Tile>
          <LauncherFold />
          <TrashDock>
            <Tile $bg="radial-gradient(ellipse 50px 25px at 50% 0, #777773, transparent), linear-gradient(#41413f, #292a2b 45%, #3d3d3c)" $edge="#41413e"><TrashIcon /></Tile>
          </TrashDock>
          <Pip />
          <Pip $right />
        </Launcher>
        <Browser>
          <TabStrip>
            <Tab>
              <SpinnerIcon />
              <Gap $w={5} />
              <Text $ls={0.75}>https://www.g…27yjYqrZTZGWp</Text>
            </Tab>
            <NewTab><PlusIcon /></NewTab>
          </TabStrip>
          <NavBar>
            <BackIcon />
            <Gap $w={17} />
            <Field $w={602}>
              <Gap $w={11} />
              <LockIcon />
              <Gap $w={11} />
              <UrlClip>
                <UrlPart $w={134} $ls={0.8}>https://www.</UrlPart>
                <UrlPart $strong $w={119} $ls={0.45}>google.com</UrlPart>
                <UrlPart $ls={0.6}>/url?esrc=s&amp;q=&amp;rct=j</UrlPart>
              </UrlClip>
              <Gap $w={9} />
              <StarIcon />
              <Gap $w={9} />
              <Caret />
              <Gap $w={9} />
              <StopIcon />
            </Field>
            <Gap $w={14} />
            <Field $w={233}>
              <Gap $w={4} />
              <SearchEngine>g</SearchEngine>
              <Gap $w={5} />
              <Caret />
              <Gap $w={10} />
              <Placeholder $w={147} $ls={0.5}>Google</Placeholder>
              <MagnifierIcon />
            </Field>
            <Gap $w={21} />
            <DownloadIcon />
            <Gap $w={23} />
            <HomeIcon />
            <Gap $w={18} />
            <FlyIcon />
            <Gap $w={21} />
            <Caret />
          </NavBar>
          <BookmarkBar>
            <MostVisitedIcon />
            <Gap $w={4} />
            <Text $w={129} $ls={0.95}>Most Visited</Text>
            <Gap $w={6} />
            <Caret />
            <Gap $w={24} />
            <FirefoxIcon size={22} box="5 4 69 69" />
            <Gap $w={4} />
            <Text $w={155} $ls={0.55}>Getting Started</Text>
            <Gap $w={20} />
            <GoogleIcon />
            <Gap $w={4} />
            <Text $w={72} $ls={0.5}>Google</Text>
            <Gap $w={18} />
            <FolderIcon />
            <Gap $w={3} />
            <Text $w={101} $ls={0.5}>Seed Labs</Text>
            <Gap $w={6} />
            <Caret />
          </BookmarkBar>
          <Page />
          <StatusBar>
            <CloseIcon />
            <ClockGroup>
              <ClockIcon />
              <Gap $w={9} />
              <Text $w={202} $ls={0.2}>2/10/22 - 7:53:39 pm</Text>
            </ClockGroup>
          </StatusBar>
        </Browser>
      </Workspace>
    </Desktop>
  );
}
